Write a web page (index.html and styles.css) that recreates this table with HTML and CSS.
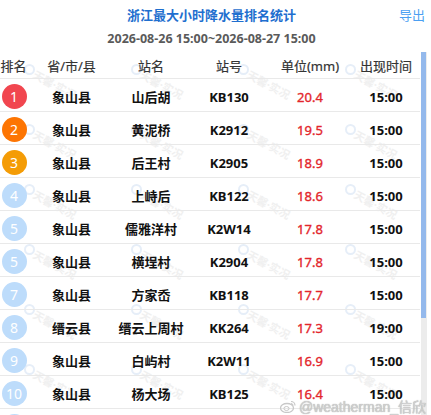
FILE: index.html
```html
<!DOCTYPE html>
<html lang="zh">
<head>
<meta charset="utf-8">
<link rel="stylesheet" href="styles.css">
</head>
<body>
<div class="page">
  <div class="top">
    <div class="title-row">
      <span></span>
      <div class="title">浙江最大小时降水量排名统计</div>
      <a class="export">导出</a>
    </div>
    <div class="date">2026-08-26 15:00~2026-08-27 15:00</div>
  </div>
  <div class="main">
    <div class="table">
      <div class="row head">
        <div>排名</div><div>省/市/县</div><div>站名</div><div>站号</div><div>单位(mm)</div><div class="c6">出现时间</div>
      </div>
      <div class="row"><div><span class="rank r1">1</span></div><div>象山县</div><div>山后胡</div><div>KB130</div><div class="val">20.4</div><div class="c6">15:00</div></div>
      <div class="row"><div><span class="rank r2">2</span></div><div>象山县</div><div>黄泥桥</div><div>K2912</div><div class="val">19.5</div><div class="c6">15:00</div></div>
      <div class="row"><div><span class="rank r3">3</span></div><div>象山县</div><div>后王村</div><div>K2905</div><div class="val">18.9</div><div class="c6">15:00</div></div>
      <div class="row"><div><span class="rank">4</span></div><div>象山县</div><div>上峙后</div><div>KB122</div><div class="val">18.6</div><div class="c6">15:00</div></div>
      <div class="row"><div><span class="rank">5</span></div><div>象山县</div><div>儒雅洋村</div><div>K2W14</div><div class="val">17.8</div><div class="c6">15:00</div></div>
      <div class="row"><div><span class="rank">5</span></div><div>象山县</div><div>横埕村</div><div>K2904</div><div class="val">17.8</div><div class="c6">15:00</div></div>
      <div class="row"><div><span class="rank">7</span></div><div>象山县</div><div>方家岙</div><div>KB118</div><div class="val">17.7</div><div class="c6">15:00</div></div>
      <div class="row"><div><span class="rank">8</span></div><div>缙云县</div><div>缙云上周村</div><div>KK264</div><div class="val">17.3</div><div class="c6">19:00</div></div>
      <div class="row"><div><span class="rank">9</span></div><div>象山县</div><div>白屿村</div><div>K2W11</div><div class="val">16.9</div><div class="c6">15:00</div></div>
      <div class="row"><div><span class="rank">10</span></div><div>象山县</div><div>杨大场</div><div>KB125</div><div class="val">16.4</div><div class="c6">15:00</div></div>
      <div class="row"><div><span class="rank"></span></div><div></div><div></div><div></div><div></div><div></div></div>
    </div>
    <div class="scrollbar"><div class="thumb"></div></div>
  </div>

  <div class="wm">
    <div class="wm-item"><i></i><b>天馨·实况</b></div><div class="wm-item"><i></i><b>天馨·实况</b></div><div class="wm-item"><i></i><b>天馨·实况</b></div><div class="wm-item"><i></i><b>天馨·实况</b></div>
    <div class="wm-item"><i></i><b>天馨·实况</b></div><div class="wm-item"><i></i><b>天馨·实况</b></div><div class="wm-item"><i></i><b>天馨·实况</b></div><div class="wm-item"><i></i><b>天馨·实况</b></div>
    <div class="wm-item"><i></i><b>天馨·实况</b></div><div class="wm-item"><i></i><b>天馨·实况</b></div><div class="wm-item"><i></i><b>天馨·实况</b></div><div class="wm-item"><i></i><b>天馨·实况</b></div>
    <div class="wm-item"><i></i><b>天馨·实况</b></div><div class="wm-item"><i></i><b>天馨·实况</b></div><div class="wm-item"><i></i><b>天馨·实况</b></div><div class="wm-item"><i></i><b>天馨·实况</b></div>
    <div class="wm-item"><i></i><b>天馨·实况</b></div><div class="wm-item"><i></i><b>天馨·实况</b></div><div class="wm-item"><i></i><b>天馨·实况</b></div><div class="wm-item"><i></i><b>天馨·实况</b></div>
    <div class="wm-item"><i></i><b>天馨·实况</b></div><div class="wm-item"><i></i><b>天馨·实况</b></div><div class="wm-item"><i></i><b>天馨·实况</b></div><div class="wm-item"><i></i><b>天馨·实况</b></div>
  </div>

  <div class="weibo">
    <svg class="wb-logo" width="16" height="13" viewBox="0 0 16 13"><ellipse cx="7" cy="8" rx="6.5" ry="4.5" fill="none" stroke="#c8c8c8" stroke-width="1.3"/><ellipse cx="6.5" cy="8.5" rx="2.6" ry="2" fill="none" stroke="#c8c8c8" stroke-width="1"/><path d="M11 1.5a4 4 0 0 1 4 4" fill="none" stroke="#c8c8c8" stroke-width="1.2"/><path d="M11 3.5a2 2 0 0 1 2 2" fill="none" stroke="#c8c8c8" stroke-width="1"/></svg>
    <span>@weatherman_信欣</span>
  </div>
</div>
</body>
</html>
```
FILE: styles.css
```css
* { box-sizing: border-box; }
html, body { margin: 0; padding: 0; background: #fff; }
body {
  width: 431px;
  height: 415px;
  overflow: hidden;
  font-family: "Noto Sans", "Noto Sans CJK SC", sans-serif;
}
.page { position: relative; width: 431px; height: 415px; overflow: hidden; }

.top { width: 423px; padding-top: 5px; height: 52px; }
.title-row {
  display: grid;
  grid-template-columns: 1fr auto 1fr;
  align-items: center;
  height: 20px;
}
.title { color: #1f6fcf; font-size: 13px; font-weight: 700; line-height: 20px; }
.export { justify-self: end; margin-right: -2px; color: #4b9ff2; font-size: 13px; line-height: 20px; }
.date {
  margin-top: 4px;
  text-align: center;
  color: #5a5a5a;
  font-size: 12.5px;
  font-weight: 700;
  line-height: 20px;
}

.main { display: flex; height: 363px; }
.table { width: 420px; position: relative; z-index: 2; }
.row {
  display: grid;
  grid-template-columns: 27px 89px 70px 86px 76px 72px;
  align-items: center;
  height: 33px;
  padding-top: 3px;
  border-bottom: 1px solid #e9e9e9;
  font-size: 13px;
  font-weight: 700;
  color: #111;
  text-align: center;
}
.row > div { white-space: nowrap; }
.row .c6 { padding-left: 4px; }
.row.head {
  height: 27px;
  padding-top: 0;
  font-weight: 400;
  color: #333;
  font-size: 13px;
  -webkit-text-stroke: 0.2px #333;
}
.val { color: #e3262c; font-weight: 400; -webkit-text-stroke: 0.35px #e3262c; }
.rank {
  display: inline-flex;
  align-items: center;
  justify-content: center;
  width: 25px;
  height: 25px;
  border-radius: 50%;
  background: #bddcfb;
  color: #fff;
  font-size: 14px;
  font-weight: 400;
  margin-left: 1px;
  vertical-align: middle;
}
.rank.r1 { background: #f1464f; }
.rank.r2 { background: #fd7503; }
.rank.r3 { background: #f49c06; }

.scrollbar { width: 6px; margin-left: 1px; background: #ececec; }
.thumb { height: 266px; background: #94b9ec; width: 5px; }

.wm {
  position: absolute;
  left: 24px;
  top: 64px;
  display: grid;
  grid-template-columns: repeat(4, 107px);
  grid-auto-rows: 60px;
  pointer-events: none;
  z-index: 1;
}
.wm-item { position: relative; }
.wm-item i {
  position: absolute;
  left: 0;
  top: 0;
  width: 11px;
  height: 11px;
  border: 2px solid #e6eef8;
  border-radius: 50%;
}
.wm-item b {
  display: block;
  position: absolute;
  left: 14px;
  top: 2px;
  font-size: 11px;
  font-weight: 700;
  color: #f0f0f0;
  transform: rotate(28deg);
  transform-origin: left top;
  white-space: nowrap;
}

.weibo {
  position: absolute;
  right: 5px;
  top: 396px;
  display: flex;
  align-items: center;
  gap: 3px;
  z-index: 3;
  color: #d0d0d0;
  font-size: 14px;
  font-family: "Liberation Sans", "Noto Sans CJK SC", sans-serif;
  text-shadow: 0 0 1px #999;
}
```
